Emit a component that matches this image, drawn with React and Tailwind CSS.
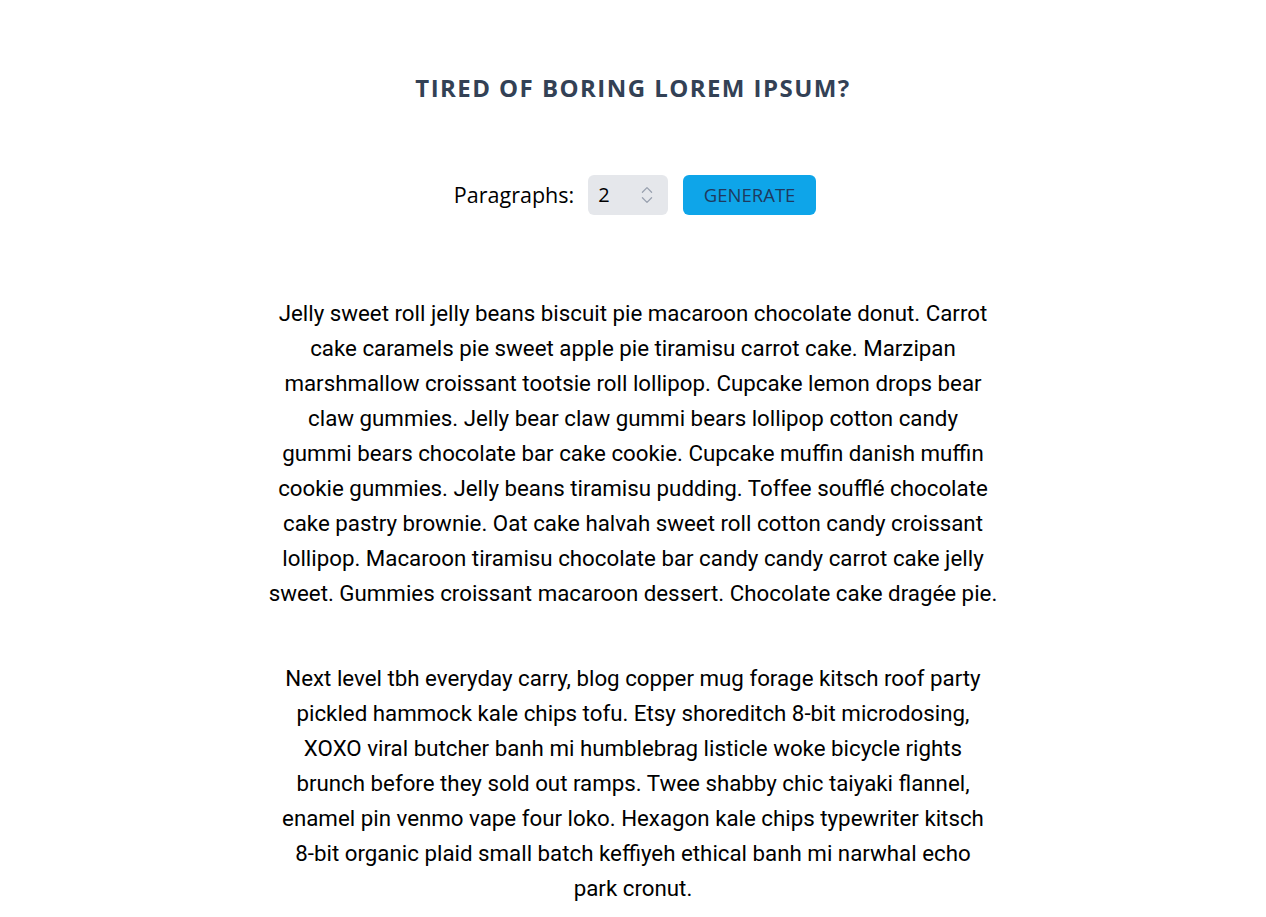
import { ChevronsUpDown } from 'lucide-react';

const paragraphs = [
    [
        'Jelly sweet roll jelly beans biscuit pie macaroon chocolate donut. Carrot',
        'cake caramels pie sweet apple pie tiramisu carrot cake. Marzipan',
        'marshmallow croissant tootsie roll lollipop. Cupcake lemon drops bear',
        'claw gummies. Jelly bear claw gummi bears lollipop cotton candy',
        'gummi bears chocolate bar cake cookie. Cupcake muffin danish muffin',
        'cookie gummies. Jelly beans tiramisu pudding. Toffee soufflé chocolate',
        'cake pastry brownie. Oat cake halvah sweet roll cotton candy croissant',
        'lollipop. Macaroon tiramisu chocolate bar candy candy carrot cake jelly',
        'sweet. Gummies croissant macaroon dessert. Chocolate cake dragée pie.'
    ],
    [
        'Next level tbh everyday carry, blog copper mug forage kitsch roof party',
        'pickled hammock kale chips tofu. Etsy shoreditch 8-bit microdosing,',
        'XOXO viral butcher banh mi humblebrag listicle woke bicycle rights',
        'brunch before they sold out ramps. Twee shabby chic taiyaki flannel,',
        'enamel pin venmo vape four loko. Hexagon kale chips typewriter kitsch',
        '8-bit organic plaid small batch keffiyeh ethical banh mi narwhal echo',
        'park cronut.'
    ]
];

const App = () => {
    return (
        <div className="min-h-screen bg-white font-['Open_Sans','Liberation_Sans',sans-serif] text-black">
            <div className="flex flex-col items-center pt-[72px] pb-20">
                <h1 className="text-[24px] leading-8 font-bold tracking-[0.06em] text-[#334155]">
                    TIRED OF BORING LOREM IPSUM?
                </h1>
                <form className="mt-[71px] ml-1 flex items-center">
                    <label className="text-[21.5px] mr-[14px]">Paragraphs:</label>
                    <div className="w-20 h-10 bg-[#e5e7eb] rounded-md flex items-center justify-between pl-[10px] pr-[10px] text-[20px]">
                        <span>2</span>
                        <ChevronsUpDown size={22} strokeWidth={1.4} className="text-gray-400" />
                    </div>
                    <button
                        type="button"
                        className="ml-[15px] w-[133px] h-10 bg-[#0ea5e9] rounded-md text-[18.5px] text-[#1e3a5f]"
                    >
                        GENERATE
                    </button>
                </form>
                <article className="mt-[81px] max-w-[760px] text-center text-[22.3px] leading-[35px] font-['Roboto',sans-serif]">
                    {paragraphs.map((lines, i) => (
                        <p key={i} className={i > 0 ? 'mt-[50px]' : ''}>
                            {lines.map((line, j) => (
                                <span key={j}>
                                    {line}
                                    {j < lines.length - 1 && <br />}
                                </span>
                            ))}
                        </p>
                    ))}
                </article>
            </div>
        </div>
    );
};

export default App;
